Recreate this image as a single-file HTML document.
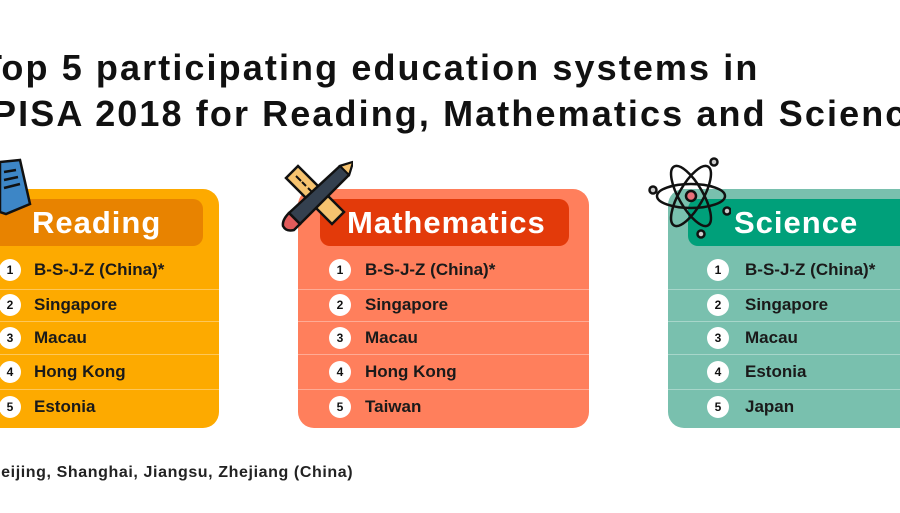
<!DOCTYPE html>
<html><head><meta charset="utf-8"><style>
body{margin:0;width:900px;height:513px;overflow:hidden;background:#fff;font-family:"Liberation Sans",sans-serif;position:relative}
.t{position:absolute;font-weight:bold;font-size:36px;color:#111;white-space:nowrap;letter-spacing:2.1px}
.card{position:absolute;top:189px;height:239px;border-radius:16px}
.hd{position:absolute;top:10px;height:47px;border-radius:10px;color:#fff;font-weight:bold;font-size:31px;line-height:47px;letter-spacing:1px}
.n{position:absolute;width:22px;height:22px;border-radius:50%;background:#fff;font-size:12px;font-weight:bold;text-align:center;line-height:22px;color:#111}
.tx{position:absolute;font-size:17px;font-weight:bold;color:#1a1a1a;white-space:nowrap}
.foot{position:absolute;left:-11px;top:464px;font-size:16px;font-weight:bold;color:#222;letter-spacing:0.6px}
.ln{position:absolute;left:0;right:0;border-top:1px solid rgba(255,255,255,.35)}
</style></head><body>
<div class="t" style="left:-20px;top:47px">Top 5 participating education systems in</div>
<div class="t" style="left:-8px;top:93px">PISA 2018 for Reading, Mathematics and Science</div>

<div class="card" style="left:-20px;width:239px;background:#fdaa00"></div>
<div class="hd" style="left:-10px;width:213px;top:199px;background:#e88300"><span style="position:absolute;left:42px">Reading</span></div>
<svg style="position:absolute;left:0;top:158px" width="40" height="62" viewBox="0 0 40 62"><path d="M0 4 L20 2 L30 46 L6 56 L0 54Z" fill="#3d86c6" stroke="#111" stroke-width="2.5"/><path d="M4 14 L16 12 M4 22 L18 19 M4 30 L20 26" stroke="#111" stroke-width="2.5"/></svg>

<div class="card" style="left:298px;width:291px;background:#ff7f5c"></div>
<div class="hd" style="left:320px;width:249px;top:199px;background:#e33a0a"><span style="position:absolute;left:27px">Mathematics</span></div>
<svg style="position:absolute;left:278px;top:160px" width="75" height="75" viewBox="0 0 75 75">
<path d="M8 18 L20 6 L66 52 L54 64Z" fill="#f6c36f" stroke="#111" stroke-width="2.5"/>
<path d="M18 16l5 5M24 22l4 4M30 28l5 5M36 34l4 4" stroke="#111" stroke-width="2"/>
<path d="M62 6 L75 2 L71 15 L22 64 L11 53Z" fill="#34404f" stroke="#111" stroke-width="2.5"/>
<path d="M62 6 L75 2 L71 15Z" fill="#f6c36f" stroke="#111" stroke-width="2"/>
<path d="M11 53 L22 64 L16 70 Q8 72 5 66 Q4 60 11 53Z" fill="#e25b5b" stroke="#111" stroke-width="2.5"/>
</svg>

<div class="card" style="left:668px;width:260px;background:#79c0ae"></div>
<div class="hd" style="left:688px;width:230px;top:199px;background:#00a07a"><span style="position:absolute;left:46px">Science</span></div>
<svg style="position:absolute;left:645px;top:154px" width="86" height="86" viewBox="0 0 86 86" fill="none" stroke="#111" stroke-width="2.5">
<ellipse cx="46" cy="42" rx="34" ry="12"/>
<ellipse cx="46" cy="42" rx="34" ry="12" transform="rotate(60 46 42)"/>
<ellipse cx="46" cy="42" rx="34" ry="12" transform="rotate(-60 46 42)"/>
<circle cx="46" cy="42" r="5" fill="#e8707a"/>
<circle cx="69" cy="8" r="3.5" fill="#ccc"/><circle cx="8" cy="36" r="3.5" fill="#ccc"/><circle cx="82" cy="57" r="3.5" fill="#ccc"/><circle cx="56" cy="80" r="3.5" fill="#ccc"/>
</svg>

<div style="position:absolute;left:-20px;top:256px;width:239px;height:168px">
<div class="ln" style="top:33px"></div><div class="ln" style="top:65px"></div><div class="ln" style="top:98px"></div><div class="ln" style="top:133px"></div>
</div>
<div style="position:absolute;left:298px;top:256px;width:291px;height:168px">
<div class="ln" style="top:33px"></div><div class="ln" style="top:65px"></div><div class="ln" style="top:98px"></div><div class="ln" style="top:133px"></div>
</div>
<div style="position:absolute;left:668px;top:256px;width:240px;height:168px">
<div class="ln" style="top:33px"></div><div class="ln" style="top:65px"></div><div class="ln" style="top:98px"></div><div class="ln" style="top:133px"></div>
</div>

<div class="n" style="left:-1px;top:259px">1</div><div class="tx" style="left:34px;top:260px">B-S-J-Z (China)*</div>
<div class="n" style="left:-1px;top:294px">2</div><div class="tx" style="left:34px;top:295px">Singapore</div>
<div class="n" style="left:-1px;top:327px">3</div><div class="tx" style="left:34px;top:328px">Macau</div>
<div class="n" style="left:-1px;top:361px">4</div><div class="tx" style="left:34px;top:362px">Hong Kong</div>
<div class="n" style="left:-1px;top:396px">5</div><div class="tx" style="left:34px;top:397px">Estonia</div>

<div class="n" style="left:329px;top:259px">1</div><div class="tx" style="left:365px;top:260px">B-S-J-Z (China)*</div>
<div class="n" style="left:329px;top:294px">2</div><div class="tx" style="left:365px;top:295px">Singapore</div>
<div class="n" style="left:329px;top:327px">3</div><div class="tx" style="left:365px;top:328px">Macau</div>
<div class="n" style="left:329px;top:361px">4</div><div class="tx" style="left:365px;top:362px">Hong Kong</div>
<div class="n" style="left:329px;top:396px">5</div><div class="tx" style="left:365px;top:397px">Taiwan</div>

<div class="n" style="left:707px;top:259px">1</div><div class="tx" style="left:745px;top:260px">B-S-J-Z (China)*</div>
<div class="n" style="left:707px;top:294px">2</div><div class="tx" style="left:745px;top:295px">Singapore</div>
<div class="n" style="left:707px;top:327px">3</div><div class="tx" style="left:745px;top:328px">Macau</div>
<div class="n" style="left:707px;top:361px">4</div><div class="tx" style="left:745px;top:362px">Estonia</div>
<div class="n" style="left:707px;top:396px">5</div><div class="tx" style="left:745px;top:397px">Japan</div>

<div class="foot">Beijing, Shanghai, Jiangsu, Zhejiang (China)</div>
</body></html>
